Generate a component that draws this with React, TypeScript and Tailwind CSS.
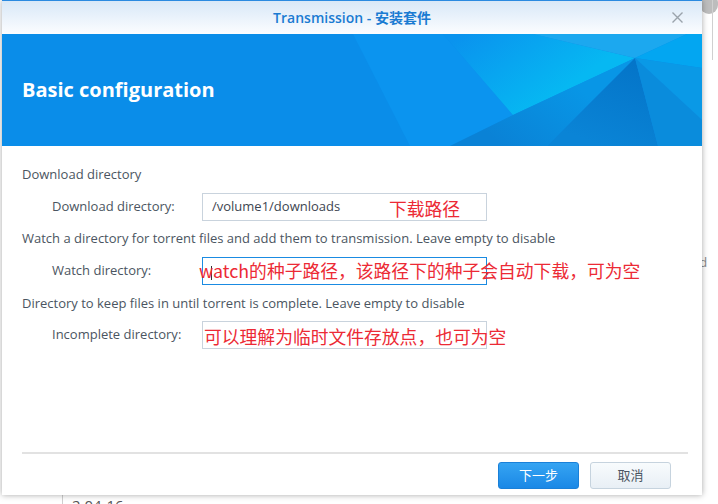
import React from "react";

function Banner() {
  return (
    <div className="relative h-[112px] shrink-0 bg-[#0a8de9] overflow-hidden">
      <svg className="absolute inset-0" width="700" height="112" viewBox="0 0 700 112">
        <defs>
          <linearGradient id="glow" x1="460" y1="0" x2="520" y2="85" gradientUnits="userSpaceOnUse">
            <stop offset="0" stopColor="#0a93ee" />
            <stop offset="1" stopColor="#06b8f2" />
          </linearGradient>
          <linearGradient id="below" x1="560" y1="40" x2="500" y2="112" gradientUnits="userSpaceOnUse">
            <stop offset="0" stopColor="#0896e6" />
            <stop offset="1" stopColor="#0a82d6" />
          </linearGradient>
          <linearGradient id="under" x1="633" y1="24" x2="600" y2="112" gradientUnits="userSpaceOnUse">
            <stop offset="0" stopColor="#0474c8" />
            <stop offset="1" stopColor="#0a84d6" />
          </linearGradient>
        </defs>
        <polygon points="351,0 441,0 511,81 448,112 408,112" fill="#0b94ef" />
        <polygon points="441,0 531,0 633,24 511,81" fill="url(#glow)" />
        <polygon points="531,0 685,0 633,24" fill="#1ca8ef" />
        <polygon points="685,0 700,0 700,34 633,24" fill="#03a6f1" />
        <polygon points="633,24 700,34 700,86" fill="#0a99e6" />
        <polygon points="511,81 633,24 545,112 448,112" fill="url(#below)" />
        <polygon points="633,24 656,112 545,112" fill="url(#under)" />
        <polygon points="633,24 700,86 700,112 656,112" fill="#0a8cdc" />
      </svg>
      <div className="relative h-full flex items-center pl-[20px]">
        <span className="text-[20px] font-bold text-white">Basic configuration</span>
      </div>
    </div>
  );
}

function Row({
  label,
  focused,
  value,
  children,
}: {
  label: string;
  focused?: boolean;
  value?: string;
  children?: React.ReactNode;
}) {
  return (
    <div className="flex items-center h-[28px]">
      <div className="w-[200px] pl-[50px] text-[13px] text-[#4b5561]">{label}</div>
      <div
        className={
          focused
            ? "relative w-[285px] h-[28px] border border-[#1a8be2] bg-white"
            : "relative w-[285px] h-[28px] border border-[#c9d3dd] bg-white"
        }
      >
        {value ? (
          <div className="h-full flex items-center pl-[9px] text-[13px] text-[#3d4651]">{value}</div>
        ) : null}
        {children}
      </div>
    </div>
  );
}

const red = "text-[17.8px] leading-[20px] text-[#ec2a35] whitespace-nowrap font-['Noto_Sans_CJK_SC',sans-serif]";

export default function App() {
  return (
    <div className="relative w-[718px] h-[504px] overflow-hidden bg-white font-['Open_Sans','Noto_Sans_CJK_SC',sans-serif]">
      {/* background page */}
      <div className="absolute left-[700px] top-[-6px] w-[18px] h-[20px] rounded-full bg-[#bdbdbd]" />
      <div className="absolute left-[712px] top-0 w-[1px] h-[60px] bg-[#d0d0d0]" />
      <div className="absolute left-[684px] top-[253px] text-[13px] text-[#888]">ded</div>
      <div className="absolute left-[62px] top-[490px] w-[1px] h-[20px] bg-[#cfcfcf]" />
      <div className="absolute left-[72px] top-[494px] text-[15px] text-[#555]">2.04-16</div>

      {/* dialog window */}
      <div className="absolute left-[2px] top-0 w-[700px] h-[495px] bg-white shadow-[0_0_6px_rgba(0,0,0,0.35)] flex flex-col">
        <div className="relative h-[34px] shrink-0 flex items-center justify-center border-t border-[#2a8ae0] bg-gradient-to-b from-[#d8e8f7] to-[#fcfdff]">
          <span className="text-[14px] font-semibold text-[#1a7bd2]">Transmission - 安装套件</span>
          <svg
            className="absolute right-[19px] top-[11px]"
            width="11"
            height="11"
            viewBox="0 0 11 11"
          >
            <path d="M0.5 0.5 L10.5 10.5 M10.5 0.5 L0.5 10.5" stroke="#9aa3ab" strokeWidth="1.4" />
          </svg>
        </div>

        <Banner />

        <div className="flex-1 flex flex-col pt-[19px]">
          <div className="pl-[20px] h-[18px] leading-[18px] text-[13px] text-[#4b5561]">Download directory</div>
          <div className="mt-[10px]">
            <Row label="Download directory:" value="/volume1/downloads">
              <span className={"absolute left-[186px] top-[4px] " + red}>下载路径</span>
            </Row>
          </div>
          <div className="mt-[8px] pl-[20px] h-[18px] leading-[18px] text-[13px] text-[#4b5561]">
            Watch a directory for torrent files and add them to transmission. Leave empty to disable
          </div>
          <div className="mt-[10px]">
            <Row label="Watch directory:" focused>
              <div className="absolute left-[8px] top-[8px] w-[1px] h-[14px] bg-[#333]" />
              <span className={"absolute left-[-4px] top-[2px] " + red}>watch的种子路径，该路径下的种子会自动下载，可为空</span>
            </Row>
          </div>
          <div className="mt-[9px] pl-[20px] h-[18px] leading-[18px] text-[13px] text-[#4b5561]">
            Directory to keep files in until torrent is complete. Leave empty to disable
          </div>
          <div className="mt-[9px]">
            <Row label="Incomplete directory:">
              <span className={"absolute left-[1px] top-[4px] " + red}>可以理解为临时文件存放点，也可为空</span>
            </Row>
          </div>
        </div>

        <div className="shrink-0 flex flex-col pb-[6px]">
          <div className="mx-[20px] w-[666px] h-[2px] bg-[#e2e2e2]" />
          <div className="mt-[8px] flex justify-end gap-[11px] pr-[31px]">
            <button className="w-[81px] h-[27px] rounded-[3px] border border-[#1a80d8] bg-gradient-to-b from-[#35a4f2] to-[#1a88e6] text-[13px] text-white">
              下一步
            </button>
            <button className="w-[81px] h-[27px] rounded-[3px] border border-[#c6d3de] bg-gradient-to-b from-[#f8fbfd] to-[#e8eff5] text-[13px] text-[#4b5561]">
              取消
            </button>
          </div>
        </div>
      </div>
    </div>
  );
}
